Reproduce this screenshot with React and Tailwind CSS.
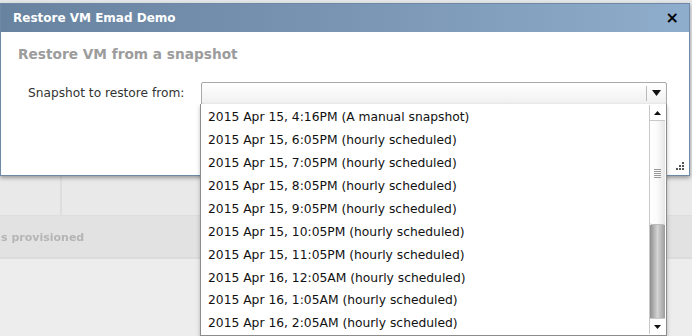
import React from "react";

const items = [
  "2015 Apr 15, 4:16PM (A manual snapshot)",
  "2015 Apr 15, 6:05PM (hourly scheduled)",
  "2015 Apr 15, 7:05PM (hourly scheduled)",
  "2015 Apr 15, 8:05PM (hourly scheduled)",
  "2015 Apr 15, 9:05PM (hourly scheduled)",
  "2015 Apr 15, 10:05PM (hourly scheduled)",
  "2015 Apr 15, 11:05PM (hourly scheduled)",
  "2015 Apr 16, 12:05AM (hourly scheduled)",
  "2015 Apr 16, 1:05AM (hourly scheduled)",
  "2015 Apr 16, 2:05AM (hourly scheduled)",
];

export default function App() {
  return (
    <div className="relative w-[692px] h-[336px] overflow-hidden bg-[#ededed] font-['DejaVu_Sans',Verdana,sans-serif]">
      {/* background page */}
      <div className="flex flex-col">
        <div className="h-[176px] bg-[#e4e6e8]" />
        <div className="h-[40px] flex bg-[#e9e9e9] border-b border-[#dedede]">
          <div className="w-[62px] border-r-2 border-[#dedede]" />
          <div className="flex-1" />
        </div>
        <div className="h-[43px] bg-[#e3e2e2] border-b-2 border-[#dcdcdc] flex items-center">
          <span className="ml-[1px] mt-[4px] text-[11px] font-bold text-[#b5b5b5] blur-[0.5px]">s provisioned</span>
        </div>
        <div className="flex-1 bg-[#ededed]" />
      </div>

      {/* modal */}
      <div className="absolute left-0 top-[3px] w-[690px] h-[173px] bg-white border border-[#6d89a6] shadow-[0_2px_4px_rgba(0,0,0,0.35)] flex flex-col">
        <div className="h-[28px] flex items-center justify-between pl-[12px] pr-[10px] bg-gradient-to-r from-[#6783a0] via-[#7995b3] to-[#8fadcc]">
          <span className="text-white font-bold text-[12px]">Restore VM Emad Demo</span>
          <span className="text-black font-bold text-[16px] leading-none">×</span>
        </div>
        <div className="flex-1 relative">
          <div className="pt-[12px] pl-[17px] text-[13.7px] font-bold text-[#9c9c9c]">Restore VM from a snapshot</div>
          <div className="flex items-center mt-[17px]">
            <span className="ml-[27px] w-[173px] text-[12.2px] text-[#333]">Snapshot to restore from:</span>
            <div className="w-[466px] h-[23px] border border-[#a9a9a9] rounded-[2px] bg-gradient-to-b from-white to-[#f0f0f0] flex items-center justify-end">
              <div className="h-[15px] border-l border-[#bbb] w-[20px] flex items-center justify-center">
                <svg width="9" height="6" viewBox="0 0 9 6"><path d="M0 0h9L4.5 6z" fill="#111" /></svg>
              </div>
            </div>
          </div>
          <div className="absolute right-[4px] bottom-[4px]">
            <svg width="10" height="10" viewBox="0 0 10 10" fill="#555">
              <rect x="7" y="1" width="2" height="2" />
              <rect x="4" y="4" width="2" height="2" />
              <rect x="7" y="4" width="2" height="2" />
              <rect x="1" y="7" width="2" height="2" />
              <rect x="4" y="7" width="2" height="2" />
              <rect x="7" y="7" width="2" height="2" />
            </svg>
          </div>
        </div>
      </div>

      {/* dropdown list */}
      <div className="absolute left-[200px] top-[104px] w-[467px] h-[232px] bg-white border-l border-r border-b border-[#8c8c8c] shadow-[0_2px_4px_rgba(0,0,0,0.25)] flex">
        <div className="flex-1 flex flex-col pt-[2px]">
          {items.map((t) => (
            <div key={t} className="h-[23px] flex items-center pl-[7px] text-[12.3px] text-[#111] whitespace-nowrap">{t}</div>
          ))}
        </div>
        <div className="w-[16px] mr-[1px] mt-[1px] mb-[1px] flex flex-col border-l border-[#c8c8c8]">
          <div className="h-[16px] bg-white border-b border-[#c8c8c8] flex items-center justify-center">
            <svg width="7" height="4" viewBox="0 0 7 4"><path d="M3.5 0L7 4H0z" fill="#111" /></svg>
          </div>
          <div className="h-[104px] bg-gradient-to-r from-white via-[#fafafa] to-[#e6e6e6] border-b border-[#bcbcbc] rounded-b-[2px] flex items-center justify-center">
            <div className="flex flex-col gap-[1px] mt-[2px]">
              {[0, 1, 2, 3, 4].map((i) => (
                <div key={i} className="w-[7px] h-[1px] bg-[#9a9a9a]" />
              ))}
            </div>
          </div>
          <div className="flex-1 bg-gradient-to-r from-[#8f8f8f] via-[#d4d4d4] to-[#9c9c9c]" />
          <div className="h-[16px] bg-white border-t border-[#c8c8c8] flex items-center justify-center">
            <svg width="7" height="4" viewBox="0 0 7 4"><path d="M0 0h7L3.5 4z" fill="#111" /></svg>
          </div>
        </div>
      </div>
    </div>
  );
}
